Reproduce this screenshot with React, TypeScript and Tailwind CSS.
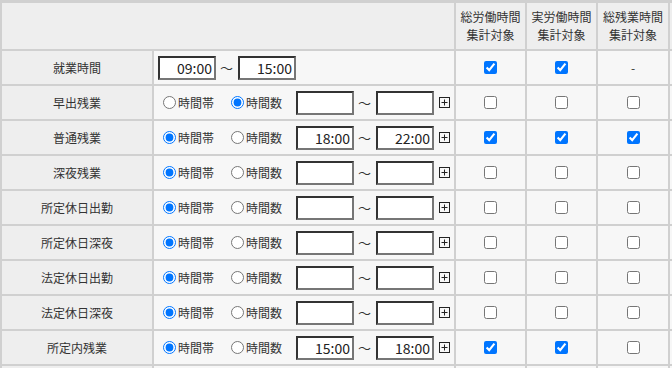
import React from "react";

type Row = {
  label: string;
  mode: "fixed" | "band" | "count";
  from?: string;
  to?: string;
  checks: (boolean | null)[];
};

const rows: Row[] = [
  { label: "就業時間", mode: "fixed", from: "09:00", to: "15:00", checks: [true, true, null] },
  { label: "早出残業", mode: "count", checks: [false, false, false] },
  { label: "普通残業", mode: "band", from: "18:00", to: "22:00", checks: [true, true, true] },
  { label: "深夜残業", mode: "band", checks: [false, false, false] },
  { label: "所定休日出勤", mode: "band", checks: [false, false, false] },
  { label: "所定休日深夜", mode: "band", checks: [false, false, false] },
  { label: "法定休日出勤", mode: "band", checks: [false, false, false] },
  { label: "法定休日深夜", mode: "band", checks: [false, false, false] },
  { label: "所定内残業", mode: "band", from: "15:00", to: "18:00", checks: [true, true, false] },
];

const TimeBox = ({ value }: { value?: string }) => (
  <input
    type="text"
    readOnly
    defaultValue={value ?? ""}
    className="w-[58px] h-[24px] border-2 border-t-[#333] border-l-[#333] border-r-[#767676] border-b-[#767676] bg-white text-right pr-[2px] text-[14px] text-[#222] outline-none"
  />
);

const PlusIcon = () => (
  <svg width="11" height="11" viewBox="0 0 11 11" className="ml-[5px]">
    <rect x="0.5" y="0.5" width="10" height="10" fill="none" stroke="#222" />
    <path d="M5.5 2.5v6M2.5 5.5h6" stroke="#222" />
  </svg>
);

const Tilde = () => <span className="pl-[4px] pr-[5px] text-[13px] text-[#333]">～</span>;

const TimeCell = ({ row, idx }: { row: Row; idx: number }) => {
  if (row.mode === "fixed") {
    return (
      <div className="flex items-center pl-1 bg-[#f7f7f7]">
        <TimeBox value={row.from} />
        <Tilde />
        <TimeBox value={row.to} />
      </div>
    );
  }
  return (
    <div className="flex items-center pl-1 bg-[#f7f7f7]">
      <label className="flex items-center">
        <input type="radio" name={`m${idx}`} defaultChecked={row.mode === "band"} className="mt-0 mb-0 ml-[5px] mr-[2px]" />
        <span>時間帯</span>
      </label>
      <label className="flex items-center ml-[12px]">
        <input type="radio" name={`m${idx}`} defaultChecked={row.mode === "count"} className="mt-0 mb-0 ml-[5px] mr-[2px]" />
        <span>時間数</span>
      </label>
      <div className="ml-[14px] flex items-center">
        <TimeBox value={row.from} />
        <Tilde />
        <TimeBox value={row.to} />
        <PlusIcon />
      </div>
    </div>
  );
};

export default function App() {
  return (
    <div
      className="h-[368px] w-[672px] overflow-hidden bg-[#f7f7f7] text-[12px] text-[#333]"
      style={{ fontFamily: '"Noto Sans CJK JP", "Noto Sans", sans-serif' }}
    >
      <div className="grid grid-cols-[150px_300px_69px_69px_70px_1fr] grid-rows-[46px] auto-rows-[33px] gap-[2px] bg-[#d0d0d0] pt-[3px] pl-[2px]">
        <div className="col-span-2 bg-[#eeeeee]" />
        {["総労働時間", "実労働時間", "総残業時間"].map((h) => (
          <div key={h} className="bg-[#eeeeee] flex flex-col items-center justify-center leading-[18px] text-[12px]">
            <span>{h}</span>
            <span>集計対象</span>
          </div>
        ))}
        <div className="bg-[#eeeeee]" />

        {rows.map((row, i) => (
          <React.Fragment key={row.label}>
            <div className="bg-[#eeeeee] flex items-center justify-center">{row.label}</div>
            <TimeCell row={row} idx={i} />
            {row.checks.map((c, j) => (
              <div key={j} className="bg-[#f7f7f7] flex items-center justify-center">
                {c === null ? (
                  <span className="text-[12px]">-</span>
                ) : (
                  <input type="checkbox" defaultChecked={c} className="m-0" />
                )}
              </div>
            ))}
            <div className="bg-[#f7f7f7]" />
          </React.Fragment>
        ))}

        <div className="bg-[#eeeeee]" />
        <div className="bg-[#f7f7f7]" />
        <div className="bg-[#f7f7f7]" />
        <div className="bg-[#f7f7f7]" />
        <div className="bg-[#f7f7f7]" />
        <div className="bg-[#f7f7f7]" />
      </div>
    </div>
  );
}
